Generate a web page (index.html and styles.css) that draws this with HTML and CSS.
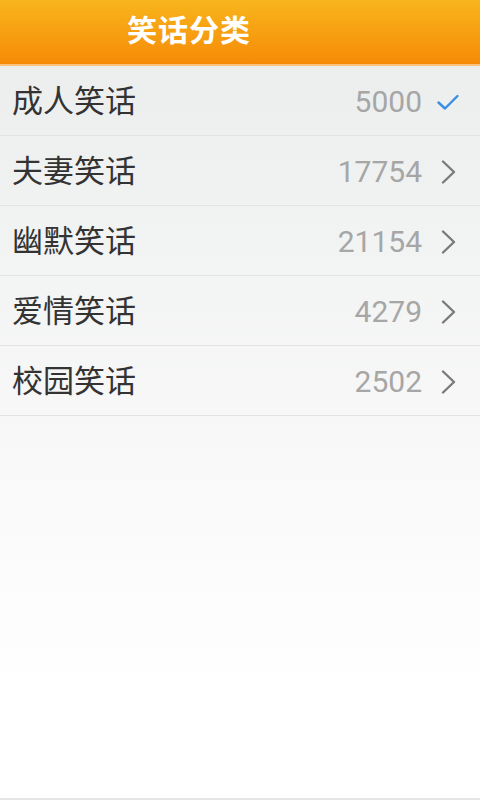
FILE: index.html
```html
<!DOCTYPE html>
<html lang="zh">
<head>
<meta charset="utf-8">
<link rel="stylesheet" href="styles.css">
</head>
<body>
<div class="app">
  <header class="bar"><h1 class="title">笑话分类</h1></header>
  <ul class="list">
    <li class="row"><span class="name">成人笑话</span><span class="count">5000</span>
      <svg class="icon" viewBox="0 0 24 24"><path d="M2.5 12.5 L9 18.5 L21.5 6" fill="none" stroke="#3a8ee6" stroke-width="2.4" stroke-linecap="round" stroke-linejoin="round"/></svg></li>
    <li class="row"><span class="name">夫妻笑话</span><span class="count">17754</span>
      <svg class="icon" viewBox="0 0 24 24"><path d="M7 1.5 L18 12 L7 22.5" fill="none" stroke="#7a7a7a" stroke-width="2.4" stroke-linecap="round" stroke-linejoin="round"/></svg></li>
    <li class="row"><span class="name">幽默笑话</span><span class="count">21154</span>
      <svg class="icon" viewBox="0 0 24 24"><path d="M7 1.5 L18 12 L7 22.5" fill="none" stroke="#7a7a7a" stroke-width="2.4" stroke-linecap="round" stroke-linejoin="round"/></svg></li>
    <li class="row"><span class="name">爱情笑话</span><span class="count">4279</span>
      <svg class="icon" viewBox="0 0 24 24"><path d="M7 1.5 L18 12 L7 22.5" fill="none" stroke="#7a7a7a" stroke-width="2.4" stroke-linecap="round" stroke-linejoin="round"/></svg></li>
    <li class="row"><span class="name">校园笑话</span><span class="count">2502</span>
      <svg class="icon" viewBox="0 0 24 24"><path d="M7 1.5 L18 12 L7 22.5" fill="none" stroke="#7a7a7a" stroke-width="2.4" stroke-linecap="round" stroke-linejoin="round"/></svg></li>
  </ul>
</div>
</body>
</html>
```
FILE: styles.css
```css
html, body {
  margin: 0;
  padding: 0;
}
body {
  width: 480px;
  height: 800px;
  overflow: hidden;
  font-family: Roboto, "Noto Sans CJK SC", sans-serif;
}
.app {
  height: 800px;
  display: flex;
  flex-direction: column;
  background: linear-gradient(to bottom, #eceeee 65px, #f7f7f7 400px, #ffffff 700px);
  border-bottom: 2px solid #e6e6e6;
  box-sizing: border-box;
}
.bar {
  height: 64px;
  flex: none;
  background: linear-gradient(to bottom, #f8b51c 0%, #f7a012 50%, #f68a06 100%);
  border-bottom: 2px solid #fbc27c;
  display: flex;
  align-items: center;
  padding-left: 127px;
  box-sizing: content-box;
}
.title {
  margin: 0;
  color: #ffffff;
  font-size: 30px;
  font-weight: bold;
  letter-spacing: 1px;
  line-height: 1;
  margin-top: -2px;
}
.list {
  list-style: none;
  margin: 0;
  padding: 0;
}
.row {
  height: 69px;
  border-bottom: 1px solid #e3e3e3;
  display: flex;
  align-items: center;
  padding: 2px 20px 0 12px;
  box-sizing: border-box;
  height: 70px;
}
.name {
  flex: 1;
  font-size: 31px;
  color: #333333;
  line-height: 1;
}
.count {
  font-size: 30px;
  color: #a6a6a6;
  line-height: 1;
  margin-right: 14px;
}
.icon {
  width: 24px;
  height: 24px;
}
```
